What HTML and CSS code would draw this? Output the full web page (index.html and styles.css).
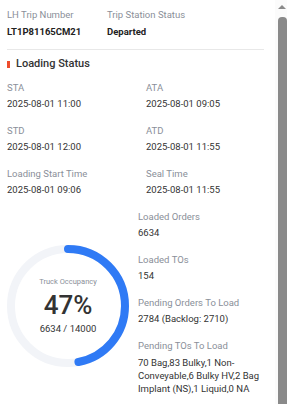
FILE: index.html
```html
<!DOCTYPE html>
<html>
<head>
<meta charset="utf-8">
<link rel="stylesheet" href="styles.css">
</head>
<body>
<div class="frame">
  <div class="content">
    <div class="header">
      <div class="field w100">
        <div class="label">LH Trip Number</div>
        <div class="value bold">LT1P81165CM21</div>
      </div>
      <div class="field">
        <div class="label">Trip Station Status</div>
        <div class="value bold">Departed</div>
      </div>
    </div>
    <div class="divider"></div>
    <div class="title"><span class="bar"></span>Loading Status</div>
    <div class="grid">
      <div class="field"><div class="label">STA</div><div class="value">2025-08-01 11:00</div></div>
      <div class="field"><div class="label">ATA</div><div class="value">2025-08-01 09:05</div></div>
      <div class="field"><div class="label">STD</div><div class="value">2025-08-01 12:00</div></div>
      <div class="field"><div class="label">ATD</div><div class="value">2025-08-01 11:55</div></div>
      <div class="field"><div class="label">Loading Start Time</div><div class="value">2025-08-01 09:06</div></div>
      <div class="field"><div class="label">Seal Time</div><div class="value">2025-08-01 11:55</div></div>
    </div>
    <div class="lower">
      <div class="donut">
        <svg width="122" height="122" viewBox="0 0 122 122">
          <circle cx="61" cy="61" r="57" fill="none" stroke="#f2f4f8" stroke-width="8"/>
          <circle cx="61" cy="61" r="57" fill="none" stroke="#2f7af5" stroke-width="8" stroke-linecap="round"
            stroke-dasharray="168.3 358.1" transform="rotate(-90 61 61)"/>
        </svg>
        <div class="donut-text">
          <div class="occ-label">Truck Occupancy</div>
          <div class="occ-pct">47%</div>
          <div class="occ-count">6634 / 14000</div>
        </div>
      </div>
      <div class="stats">
        <div class="field"><div class="label">Loaded Orders</div><div class="value">6634</div></div>
        <div class="field"><div class="label">Loaded TOs</div><div class="value">154</div></div>
        <div class="field"><div class="label">Pending Orders To Load</div><div class="value">2784 (Backlog: 2710)</div></div>
        <div class="field"><div class="label">Pending TOs To Load</div><div class="value multi">70 Bag,83 Bulky,1 Non-Conveyable,6 Bulky HV,2 Bag Implant (NS),1 Liquid,0 NA</div></div>
      </div>
    </div>
  </div>
  <div class="scrollbar">
    <div class="arrow"></div>
    <div class="thumb"></div>
  </div>
</div>
</body>
</html>
```
FILE: styles.css
```css
html, body {
  margin: 0;
  padding: 0;
  background: #fff;
}
body {
  font-family: Roboto, "Liberation Sans", sans-serif;
  color: #333;
}
.frame {
  display: flex;
  width: 287px;
  height: 404px;
  overflow: hidden;
}
.content {
  flex: 1;
  padding: 9px 11px 0 7px;
  min-width: 0;
}
.header {
  display: flex;
}
.w100 {
  width: 100px;
}
.label {
  font-size: 9.5px;
  line-height: 12px;
  color: #8a8f99;
}
.value {
  font-size: 9.5px;
  line-height: 12px;
  color: #333;
  margin-top: 4px;
}
.header .value {
  margin-top: 5px;
}
.value.bold {
  font-weight: 700;
  color: #222;
}
.divider {
  height: 1px;
  background: #e8e8e8;
  margin-top: 11px;
}
.title {
  display: flex;
  align-items: center;
  font-size: 11px;
  font-weight: 500;
  color: #333;
  margin-top: 7px;
  line-height: 14px;
}
.bar {
  width: 3px;
  height: 7px;
  background: #ee4d2d;
  margin: 0 6px 0 0;
}
.grid {
  display: grid;
  grid-template-columns: 139px 1fr;
  row-gap: 15px;
  margin-top: 11px;
}
.lower {
  display: flex;
  margin-top: 15px;
}
.donut {
  position: relative;
  width: 122px;
  height: 122px;
  margin-top: 34px;
  margin-right: 9px;
  flex: none;
}
.donut svg {
  display: block;
}
.donut-text {
  position: absolute;
  inset: 0;
  display: flex;
  flex-direction: column;
  align-items: center;
  justify-content: center;
}
.occ-label {
  font-size: 7.5px;
  color: #8a8f99;
  line-height: 10px;
}
.occ-pct {
  font-size: 26px;
  font-weight: 500;
  color: #333;
  line-height: 30px;
  margin-top: 3px;
}
.occ-count {
  font-size: 9.5px;
  color: #333;
  line-height: 12px;
  margin-top: 3px;
}
.stats {
  flex: 1;
  display: flex;
  flex-direction: column;
  gap: 15px;
}
.value.multi {
  line-height: 13px;
}
.scrollbar {
  width: 12px;
  flex: none;
  display: flex;
  flex-direction: column;
  align-items: center;
  background: #fbfbfb;
}
.arrow {
  width: 0;
  height: 0;
  border-left: 4px solid transparent;
  border-right: 4px solid transparent;
  border-bottom: 4px solid #8a8a8a;
  margin-top: 5px;
  margin-left: 1px;
}
.thumb {
  width: 9px;
  margin-left: 2px;
  flex: 1;
  margin-top: 8px;
  background: #8a8a8a;
  border-radius: 4px 4px 0 0;
}
```
